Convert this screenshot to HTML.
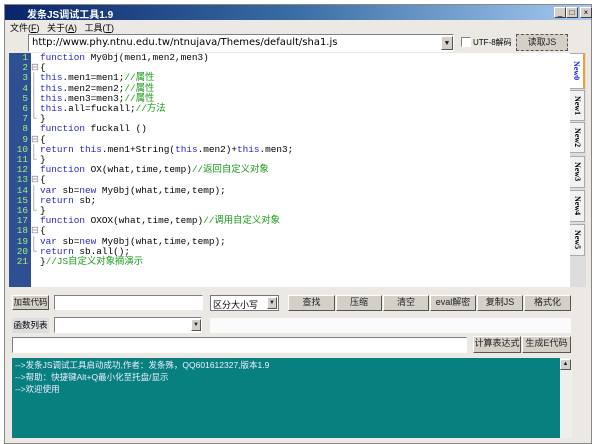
<!DOCTYPE html>
<html><head><meta charset="utf-8"><style>
*{box-sizing:border-box;margin:0;padding:0}
body{width:600px;height:432px;background:#fff;font-family:"Liberation Sans","Noto Sans CJK SC",sans-serif;font-size:9px;position:relative;overflow:hidden}
.a{position:absolute}
.win{left:4px;top:4px;width:588px;height:440px;background:#ece9e4;border:1px solid #888}
.title{left:5px;top:5px;width:586px;height:15px;background:linear-gradient(90deg,#0a246a,#3a6ea5 50%,#a6caf0);color:#fff;font-weight:bold;font-size:10px;padding:1px 0 0 22px}
.tb{top:7px;width:12px;height:11px;background:#d4d0c8;border:1px solid;border-color:#fff #404040 #404040 #fff;font-size:8px;text-align:center;line-height:9px;color:#000}
.menu{left:10px;top:21px;font-size:9px}
.btn{background:#d4d0c8;border:1px solid;border-color:#fff #555 #555 #fff;text-align:center;font-size:9px;line-height:13px;color:#222;white-space:nowrap;overflow:hidden}
.inp{background:#fff;border:1px solid;border-color:#808080 #fff #fff #808080}
.code{font-family:"Liberation Mono","Noto Sans CJK SC",monospace;font-size:9.4px;line-height:10.2px;white-space:pre;color:#000}
.k{color:#2828c8}.c{color:#1a9a1a}
.gut{left:9px;top:53px;width:22px;height:234px;background:#2e4f92;color:#9ef07c;text-align:right;padding-right:3px}
.tab{left:570px;width:15px;background:#f2f2f2;border:1px solid #aaa;border-left:none;font-size:8px;writing-mode:vertical-rl;text-align:center;font-family:"Liberation Serif",serif;font-weight:bold;line-height:13px}
</style></head><body>
<div class="a win"></div>
<div class="a title">发条JS调试工具1.9</div>
<div class="a tb" style="left:554px">_</div><div class="a tb" style="left:566px">□</div><div class="a tb" style="left:580px">×</div>
<div class="a menu">文件(<u>F</u>)&nbsp;&nbsp; 关于(<u>A</u>)&nbsp;&nbsp; 工具(<u>T</u>)</div>
<div class="a inp" style="left:28px;top:34px;width:426px;height:18px;font-size:10px;padding:2px 3px;font-family:'DejaVu Sans',sans-serif">http://www.phy.ntnu.edu.tw/ntnujava/Themes/default/sha1.js</div>
<div class="a btn" style="left:441px;top:36px;width:12px;height:14px;font-size:7px">▼</div>
<div class="a inp" style="left:461px;top:37px;width:10px;height:10px;background:#fff"></div>
<div class="a" style="left:473px;top:37px;font-size:8px">UTF-8解码</div>
<div class="a btn" style="left:516px;top:34px;width:52px;height:17px;line-height:15px;border:1px dashed #555">读取JS</div>
<div class="a" style="left:9px;top:53px;width:561px;height:234px;background:#fff"></div>
<div class="a" style="left:570px;top:53px;width:16px;height:234px;background:#ddd"></div>
<div class="a gut code">1
2
3
4
5
6
7
8
9
10
11
12
13
14
15
16
17
18
19
20
21</div>
<div class="a code" style="left:31px;top:53px;color:#888"> 
⊟
│
│
│
│
└
 
⊟
│
└
 
⊟
│
│
└
 
⊟
│
└</div>
<div class="a code" style="left:40px;top:53px"><span class="k">function</span> My0bj(men1,men2,men3)
{
<span class="k">this</span>.men1=men1;<span class="c">//属性</span>
<span class="k">this</span>.men2=men2;<span class="c">//属性</span>
<span class="k">this</span>.men3=men3;<span class="c">//属性</span>
<span class="k">this</span>.all=fuckall;<span class="c">//方法</span>
}
<span class="k">function</span> fuckall ()
{
<span class="k">return</span> <span class="k">this</span>.men1+String(<span class="k">this</span>.men2)+<span class="k">this</span>.men3;
}
<span class="k">function</span> OX(what,time,temp)<span class="c">//返回自定义对象</span>
{
<span class="k">var</span> sb=<span class="k">new</span> My0bj(what,time,temp);
<span class="k">return</span> sb;
}
<span class="k">function</span> OXOX(what,time,temp)<span class="c">//调用自定义对象</span>
{
<span class="k">var</span> sb=<span class="k">new</span> My0bj(what,time,temp);
<span class="k">return</span> sb.all();
}<span class="c">//JS自定义对象摘演示</span></div>
<div class="a tab" style="top:53px;height:36px;background:#fff;border-right:2px solid #f0a030;color:#2020e0">New0</div>
<div class="a tab" style="top:90px;height:31px">New1</div>
<div class="a tab" style="top:122px;height:31px">New2</div>
<div class="a tab" style="top:156px;height:32px">New3</div>
<div class="a tab" style="top:190px;height:32px">New4</div>
<div class="a tab" style="top:224px;height:32px">New5</div>
<div class="a btn" style="left:12px;top:295px;width:37px;height:15px;font-size:8.5px">加载代码</div>
<div class="a inp" style="left:54px;top:295px;width:149px;height:15px"></div>
<div class="a inp" style="left:210px;top:295px;width:69px;height:16px;padding:2px;font-size:9px;border:1px solid #777">区分大小写</div>
<div class="a btn" style="left:267px;top:297px;width:10px;height:12px;font-size:6px;line-height:10px">▼</div>
<div class="a btn" style="left:288px;top:295px;width:47px;height:16px">查找</div>
<div class="a btn" style="left:336px;top:295px;width:46px;height:16px">压缩</div>
<div class="a btn" style="left:383px;top:295px;width:46px;height:16px">清空</div>
<div class="a btn" style="left:430px;top:295px;width:46px;height:16px">eval解密</div>
<div class="a btn" style="left:477px;top:295px;width:46px;height:16px">复制JS</div>
<div class="a btn" style="left:524px;top:295px;width:47px;height:16px">格式化</div>
<div class="a" style="left:12px;top:318px;width:37px;height:15px;background:#ddd;line-height:15px;text-align:center;font-size:8.5px;white-space:nowrap">函数列表</div>
<div class="a inp" style="left:54px;top:317px;width:148px;height:16px"></div>
<div class="a btn" style="left:191px;top:319px;width:10px;height:12px;font-size:6px;line-height:10px">▼</div>
<div class="a" style="left:210px;top:318px;width:361px;height:15px;background:#fbfbfb"></div>
<div class="a inp" style="left:12px;top:337px;width:455px;height:16px"></div>
<div class="a btn" style="left:473px;top:336px;width:48px;height:17px">计算表达式</div>
<div class="a btn" style="left:522px;top:336px;width:49px;height:17px">生成E代码</div>
<div class="a" style="left:12px;top:358px;width:548px;height:80px;background:#088080;color:#eef;font-size:8.5px;line-height:12px;padding:1px 3px">--&gt;发条JS调试工具启动成功,作者：发条殊，QQ601612327,版本1.9<br>--&gt;帮助：快捷键Alt+Q最小化至托盘/显示<br>--&gt;欢迎使用</div>
<div class="a" style="left:560px;top:358px;width:12px;height:80px;background:#eee"></div>
<div class="a btn" style="left:560px;top:359px;width:11px;height:11px;font-size:6px;line-height:9px">▲</div>
</body></html>
